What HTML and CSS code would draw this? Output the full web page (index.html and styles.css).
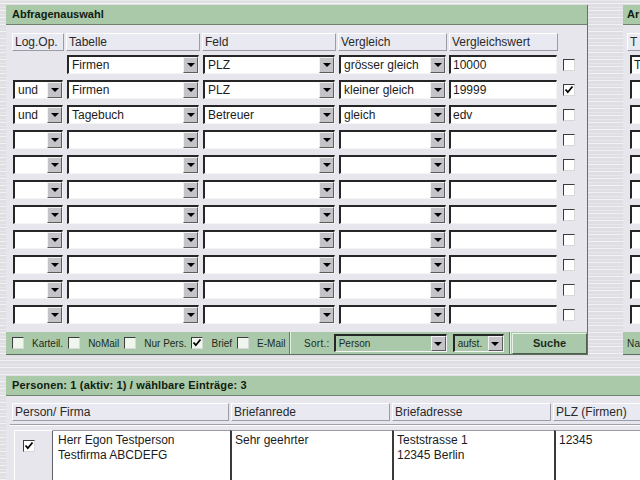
FILE: index.html
```html
<!DOCTYPE html>
<html lang="de">
<head>
  <meta charset="UTF-8" />
  <title>Abfragenauswahl</title>
  <link rel="stylesheet" href="styles.css">
</head>
<body>
  <div class="top">
    <div class="panel query">
      <div class="head">Abfragenauswahl</div>
      <div class="body">
        <div class="row hdr">
          <div class="th">Log.Op.</div>
          <div class="th">Tabelle</div>
          <div class="th">Feld</div>
          <div class="th">Vergleich</div>
          <div class="th">Vergleichswert</div>
          <div></div>
        </div>

        <div class="row">
          <div></div>
          <div class="sel"><span class="val">Firmen</span><span class="arr"></span></div>
          <div class="sel"><span class="val">PLZ</span><span class="arr"></span></div>
          <div class="sel"><span class="val">grösser gleich</span><span class="arr"></span></div>
          <div class="inp">10000</div>
          <div class="chk"><span class="cb"></span></div>
        </div>
        <div class="row">
          <div class="sel"><span class="val">und</span><span class="arr"></span></div>
          <div class="sel"><span class="val">Firmen</span><span class="arr"></span></div>
          <div class="sel"><span class="val">PLZ</span><span class="arr"></span></div>
          <div class="sel"><span class="val">kleiner gleich</span><span class="arr"></span></div>
          <div class="inp">19999</div>
          <div class="chk"><span class="cb"><svg width="10" height="10" viewBox="0 0 10 10"><path d="M1.5 4.5 L3.8 7.2 L8.5 1.5" fill="none" stroke="#000" stroke-width="1.8"/></svg></span></div>
        </div>
        <div class="row">
          <div class="sel"><span class="val">und</span><span class="arr"></span></div>
          <div class="sel"><span class="val">Tagebuch</span><span class="arr"></span></div>
          <div class="sel"><span class="val">Betreuer</span><span class="arr"></span></div>
          <div class="sel"><span class="val">gleich</span><span class="arr"></span></div>
          <div class="inp">edv</div>
          <div class="chk"><span class="cb"></span></div>
        </div>
        <div class="row">
          <div class="sel"><span class="val"></span><span class="arr"></span></div>
          <div class="sel"><span class="val"></span><span class="arr"></span></div>
          <div class="sel"><span class="val"></span><span class="arr"></span></div>
          <div class="sel"><span class="val"></span><span class="arr"></span></div>
          <div class="inp"></div>
          <div class="chk"><span class="cb"></span></div>
        </div>
        <div class="row">
          <div class="sel"><span class="val"></span><span class="arr"></span></div>
          <div class="sel"><span class="val"></span><span class="arr"></span></div>
          <div class="sel"><span class="val"></span><span class="arr"></span></div>
          <div class="sel"><span class="val"></span><span class="arr"></span></div>
          <div class="inp"></div>
          <div class="chk"><span class="cb"></span></div>
        </div>
        <div class="row">
          <div class="sel"><span class="val"></span><span class="arr"></span></div>
          <div class="sel"><span class="val"></span><span class="arr"></span></div>
          <div class="sel"><span class="val"></span><span class="arr"></span></div>
          <div class="sel"><span class="val"></span><span class="arr"></span></div>
          <div class="inp"></div>
          <div class="chk"><span class="cb"></span></div>
        </div>
        <div class="row">
          <div class="sel"><span class="val"></span><span class="arr"></span></div>
          <div class="sel"><span class="val"></span><span class="arr"></span></div>
          <div class="sel"><span class="val"></span><span class="arr"></span></div>
          <div class="sel"><span class="val"></span><span class="arr"></span></div>
          <div class="inp"></div>
          <div class="chk"><span class="cb"></span></div>
        </div>
        <div class="row">
          <div class="sel"><span class="val"></span><span class="arr"></span></div>
          <div class="sel"><span class="val"></span><span class="arr"></span></div>
          <div class="sel"><span class="val"></span><span class="arr"></span></div>
          <div class="sel"><span class="val"></span><span class="arr"></span></div>
          <div class="inp"></div>
          <div class="chk"><span class="cb"></span></div>
        </div>
        <div class="row">
          <div class="sel"><span class="val"></span><span class="arr"></span></div>
          <div class="sel"><span class="val"></span><span class="arr"></span></div>
          <div class="sel"><span class="val"></span><span class="arr"></span></div>
          <div class="sel"><span class="val"></span><span class="arr"></span></div>
          <div class="inp"></div>
          <div class="chk"><span class="cb"></span></div>
        </div>
        <div class="row">
          <div class="sel"><span class="val"></span><span class="arr"></span></div>
          <div class="sel"><span class="val"></span><span class="arr"></span></div>
          <div class="sel"><span class="val"></span><span class="arr"></span></div>
          <div class="sel"><span class="val"></span><span class="arr"></span></div>
          <div class="inp"></div>
          <div class="chk"><span class="cb"></span></div>
        </div>
        <div class="row">
          <div class="sel"><span class="val"></span><span class="arr"></span></div>
          <div class="sel"><span class="val"></span><span class="arr"></span></div>
          <div class="sel"><span class="val"></span><span class="arr"></span></div>
          <div class="sel"><span class="val"></span><span class="arr"></span></div>
          <div class="inp"></div>
          <div class="chk"><span class="cb"></span></div>
        </div>
      </div>

      <div class="tools">
        <div class="opts">
          <label class="opt"><span class="cb"></span>Karteil.</label>
          <label class="opt"><span class="cb"></span>NoMail</label>
          <label class="opt"><span class="cb"></span>Nur Pers.</label>
          <label class="opt"><span class="cb"><svg width="10" height="10" viewBox="0 0 10 10"><path d="M1.5 4.5 L3.8 7.2 L8.5 1.5" fill="none" stroke="#000" stroke-width="1.8"/></svg></span>Brief</label>
          <label class="opt"><span class="cb"></span>E-Mail</label>
        </div>
        <div class="sort">
          <span class="lbl">Sort.:</span>
          <div class="sel green wide"><span class="val">Person</span><span class="arr"></span></div>
          <div class="sel green narrow"><span class="val">aufst.</span><span class="arr"></span></div>
        </div>
        <div class="btn">Suche</div>
      </div>
    </div>

    <div class="panel side">
      <div class="head">Ar</div>
      <div class="body">
        <div class="row hdr"><div class="th">T</div></div>
        <div class="row"><div class="inp">T</div></div>
        <div class="row"><div class="inp"></div></div>
        <div class="row"><div class="inp"></div></div>
        <div class="row"><div class="inp"></div></div>
        <div class="row"><div class="inp"></div></div>
        <div class="row"><div class="inp"></div></div>
        <div class="row"><div class="inp"></div></div>
        <div class="row"><div class="inp"></div></div>
        <div class="row"><div class="inp"></div></div>
        <div class="row"><div class="inp"></div></div>
        <div class="row"><div class="inp"></div></div>
      </div>
      <div class="tools"><span class="lbl">Na</span></div>
    </div>
  </div>

  <div class="panel list">
    <div class="head">Personen: 1 (aktiv: 1) / wählbare Einträge: 3</div>
    <div class="lhdr">
      <div class="th">Person/ Firma</div>
      <div class="th">Briefanrede</div>
      <div class="th">Briefadresse</div>
      <div class="th">PLZ (Firmen)</div>
    </div>
    <div class="groove"></div>
    <div class="entry">
      <div class="pick"><span class="cb"><svg width="10" height="10" viewBox="0 0 10 10"><path d="M1.5 4.5 L3.8 7.2 L8.5 1.5" fill="none" stroke="#000" stroke-width="1.8"/></svg></span></div>
      <div class="cell first">Herr Egon Testperson<br>Testfirma ABCDEFG</div>
      <div class="cell">Sehr geehrter</div>
      <div class="cell">Teststrasse 1<br>12345 Berlin</div>
      <div class="cell">12345</div>
    </div>
  </div>
</body>
</html>
```

FILE: styles.css
```css
body {
  margin: 0;
  width: 640px;
  height: 480px;
  overflow: hidden;
  font-family: "Liberation Sans", Arial, sans-serif;
  font-size: 12px;
  color: #1c1c1c;
  background-color: #dedee3;
  background-image:
    repeating-linear-gradient(0deg, rgba(255,255,255,0.6) 0 1px, transparent 1px 3px, rgba(255,255,255,0.3) 3px 4px, transparent 4px 7px);
}
.top {
  display: flex;
  align-items: flex-start;
  padding: 5px 0 0 6px;
}
.panel {
  flex-shrink: 0;
  background: #e6e6ec;
  box-sizing: border-box;
}
.query {
  width: 582px;
  border-right: 1px solid #6c6c74;
}
.side {
  width: 17px;
  margin-left: 35px;
  overflow: hidden;
}
.side .head, .side .body, .side .tools { width: 200px; }
.head {
  height: 19px;
  line-height: 19px;
  padding-left: 6px;
  background: #a9c9a9;
  border-bottom: 1px solid #6f826f;
  font-size: 11px;
  font-weight: bold;
  color: #102010;
  white-space: nowrap;
}
.side .head { padding-left: 4px; }
.body {
  padding: 8px 0 2px 6px;
}
.side .body { padding-left: 4px; }
.row {
  display: grid;
  grid-template-columns: 52px 134px 134px 109px 109px 18px;
  column-gap: 2px;
  height: 19px;
  margin-bottom: 6px;
}
.row.hdr {
  height: 18px;
  margin-bottom: 4px;
}
.side .row { grid-template-columns: 120px; }
.th {
  box-sizing: border-box;
  height: 18px;
  line-height: 16px;
  padding-left: 2px;
  background: #e9e9f1;
  border-top: 1px solid #fff;
  border-left: 1px solid #fff;
  border-bottom: 1px solid #9c9ca6;
  border-right: 1px solid #9c9ca6;
  color: #2a2a2a;
  white-space: nowrap;
  overflow: hidden;
}
.sel, .inp {
  box-sizing: border-box;
  height: 19px;
  margin: 0 1px;
  background: #fff;
  border-top: 2px solid #262626;
  border-left: 2px solid #262626;
  border-right: 1px solid #f4f4f4;
  border-bottom: 1px solid #f4f4f4;
  display: flex;
  align-items: center;
  white-space: nowrap;
  overflow: hidden;
}
.inp {
  margin: 0 1px 0 0;
  padding-left: 2px;
  line-height: 16px;
}
.side .inp { margin-left: 3px; }
.sel .val {
  flex: 1;
  padding-left: 3px;
  line-height: 16px;
  overflow: hidden;
}
.arr {
  box-sizing: border-box;
  width: 15px;
  height: 16px;
  background: #c4c4c8;
  border-top: 1px solid #f2f2f2;
  border-left: 1px solid #f2f2f2;
  border-right: 1px solid #5c5c5c;
  border-bottom: 1px solid #5c5c5c;
  display: flex;
  align-items: center;
  justify-content: center;
  flex-shrink: 0;
}
.arr::after {
  content: "";
  border-left: 4px solid transparent;
  border-right: 4px solid transparent;
  border-top: 4px solid #000;
}
.chk {
  display: flex;
  align-items: center;
  justify-content: center;
}
.cb {
  box-sizing: border-box;
  width: 12px;
  height: 12px;
  background: #fff;
  border-top: 1px solid #3c3c3c;
  border-left: 1px solid #3c3c3c;
  border-right: 1px solid #d8d8d8;
  border-bottom: 1px solid #d8d8d8;
  display: inline-flex;
  align-items: center;
  justify-content: center;
  flex-shrink: 0;
}
.cb svg { display: block; }
.tools {
  display: flex;
  align-items: center;
  height: 22px;
  background: #aac8aa;
  border-bottom: 1px solid #5e6e5e;
  font-size: 10px;
  color: #1c2c1c;
}
.opts {
  display: flex;
  align-items: center;
  flex-shrink: 0;
  box-sizing: border-box;
  height: 100%;
  padding-left: 6px;
  width: 284px;
  border-right: 1px solid #6a7a6a;
  box-shadow: 1px 0 0 #e4f0e4;
  overflow: hidden;
}
.opt {
  display: flex;
  align-items: center;
  flex-shrink: 0;
  margin-right: 5px;
  white-space: nowrap;
}
.opt .cb {
  margin-right: 8px;
  background: #eef6ee;
}
.sort {
  display: flex;
  align-items: center;
  flex-shrink: 0;
  box-sizing: border-box;
  height: 100%;
  padding-left: 14px;
  width: 220px;
  border-right: 1px solid #6a7a6a;
  box-shadow: 1px 0 0 #e4f0e4;
}
.lbl {
  margin-right: 3px;
  letter-spacing: 0.3px;
  white-space: nowrap;
}
.side .lbl { padding-left: 4px; }
.sel.green {
  background: #aac8aa;
  height: 18px;
  font-size: 10px;
}
.sel.green .arr { height: 15px; }
.wide { width: 113px; }
.narrow { width: 51px; margin-left: 5px; }
.btn {
  box-sizing: border-box;
  height: 21px;
  width: 76px;
  margin-left: 2px;
  line-height: 19px;
  text-align: center;
  background: #aac8aa;
  border-top: 1px solid #e8f2e8;
  border-left: 1px solid #e8f2e8;
  border-bottom: 1px solid #4e5e4e;
  border-right: 1px solid #4e5e4e;
  font-size: 11px;
  font-weight: bold;
}
.list {
  width: 760px;
  margin: 21px 0 0 6px;
  height: 120px;
}
.list .head { letter-spacing: 0.15px; }
.lhdr {
  display: grid;
  grid-template-columns: 217px 159px 159px 200px;
  column-gap: 2px;
  padding: 7px 0 0 6px;
}
.groove {
  height: 0;
  margin: 3px 0 0 4px;
  border-top: 1px solid #a0a0a8;
  border-bottom: 1px solid #fff;
}
.entry {
  display: grid;
  grid-template-columns: 39px 177px 162px 162px 200px;
  margin: 4px 0 0 8px;
  height: 60px;
}
.pick {
  box-sizing: border-box;
  padding: 9px 0 0 8px;
  background: #e6e6ec;
  border-top: 1px solid #fff;
  border-left: 1px solid #fff;
  border-right: 1px solid #606068;
  border-bottom: 1px solid #606068;
}
.cell {
  box-sizing: border-box;
  background: #fff;
  border-top: 1px solid #9a9aa2;
  border-left: 2px solid #3a3a3a;
  padding: 2px 0 0 3px;
  line-height: 15px;
  white-space: nowrap;
}
.cell.first { border-left: 0; padding-left: 5px; }
```
